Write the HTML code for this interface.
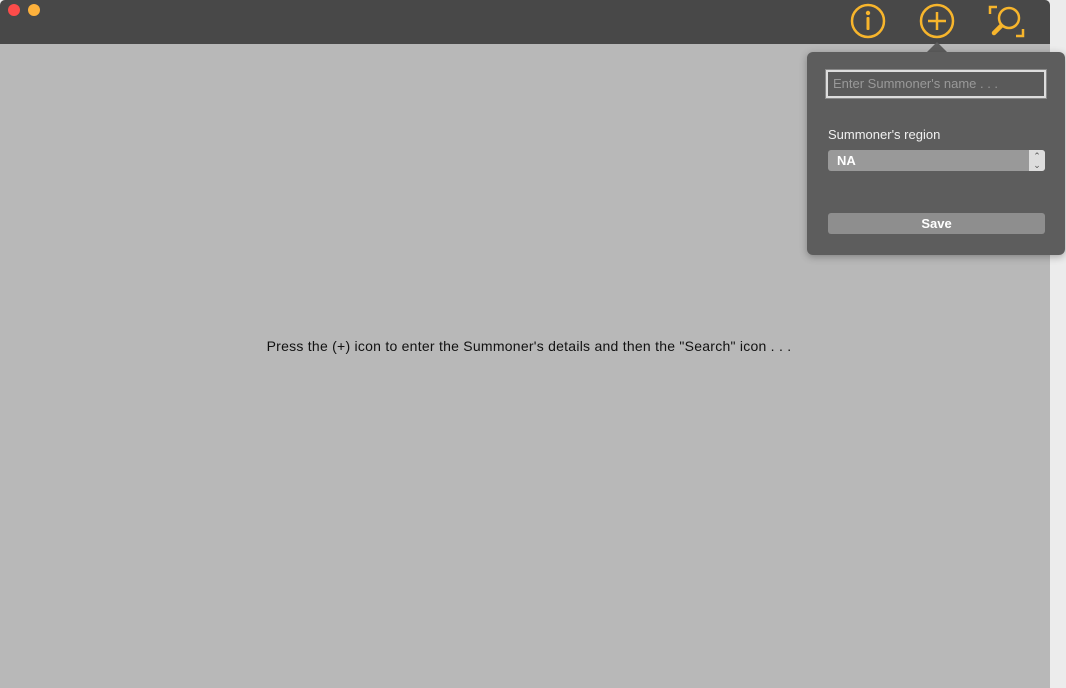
<!DOCTYPE html><html><head><style>
body{margin:0;width:1066px;height:688px;background:#ececec;position:relative;overflow:hidden;font-family:"Liberation Sans",sans-serif}
.win{position:absolute;left:0;top:0;width:1050px;height:688px;background:#b8b8b8;border-radius:5px 5px 0 0;overflow:hidden}
.tb{position:absolute;left:0;top:0;width:1050px;height:44px;background:#484848}
.dot{position:absolute;top:4px;width:12px;height:12px;border-radius:50%}
.msg{position:absolute;left:0;width:1058px;top:338px;text-align:center;font-size:14px;letter-spacing:0.25px;color:#111}
.pop{position:absolute;left:807px;top:52px;width:258px;height:203px;background:#5d5d5d;border-radius:6px;box-shadow:0 2px 8px rgba(0,0,0,.3)}
.arrow{position:absolute;left:927px;top:42px;width:0;height:0;border-left:10px solid transparent;border-right:10px solid transparent;border-bottom:10px solid #5d5d5d}
.inp{position:absolute;left:826px;top:70px;height:24px;border:2px solid #ddd;background:#5a5a5a;box-shadow:0 0 0 1px #888;font-size:13px;color:#999;line-height:24px;padding-left:5px;width:211px}
.lbl{position:absolute;left:828px;top:127px;font-size:13px;color:#f0f0f0}
.sel{position:absolute;left:828px;top:150px;width:217px;height:21px;background:#999;border-radius:3px;color:#fff;font-size:13px;font-weight:bold;line-height:21px}
.btn{position:absolute;left:828px;top:213px;width:217px;height:21px;background:#8e8e8e;border-radius:3px;color:#fff;font-size:13px;font-weight:bold;line-height:21px;text-align:center}
</style></head><body>
<div class="win"><div class="tb"></div>
<div class="dot" style="left:8px;background:#fc4c4a"></div>
<div class="dot" style="left:28px;background:#fdb13c"></div>
<div class="msg">Press the (+) icon to enter the Summoner's details and then the "Search" icon . . .</div>
</div>
<svg style="position:absolute;left:0;top:0" width="1066" height="44">
<g fill="none" stroke="#f7b52c" stroke-width="2.5">
<circle cx="868" cy="21" r="16"/>
<circle cx="937" cy="21" r="16"/>
<line x1="937" y1="12" x2="937" y2="30"/><line x1="928" y1="21" x2="946" y2="21"/>
<circle cx="1009" cy="18" r="10"/>
<line x1="1001" y1="26" x2="994" y2="33" stroke-width="4.5" stroke-linecap="round"/>
<path d="M990 14V7h7M1023 29v7h-7"/>
</g>
<circle cx="868" cy="13" r="2.2" fill="#f7b52c"/>
<rect x="866.5" y="17" width="3" height="13" fill="#f7b52c" rx="1"/>
</svg>
<div class="arrow"></div>
<div class="pop"></div>
<div class="inp">Enter Summoner's name . . .</div>
<div class="lbl">Summoner's region</div>
<div class="sel"><span style="margin-left:9px">NA</span><span style="position:absolute;right:0;top:0;width:16px;height:21px;background:#ddd;border-radius:0 3px 3px 0;color:#555;font-size:9px;line-height:9px;text-align:center;padding-top:2px;box-sizing:border-box;font-weight:normal">⌃<br>⌄</span></div>
<div class="btn">Save</div>
</body></html>
